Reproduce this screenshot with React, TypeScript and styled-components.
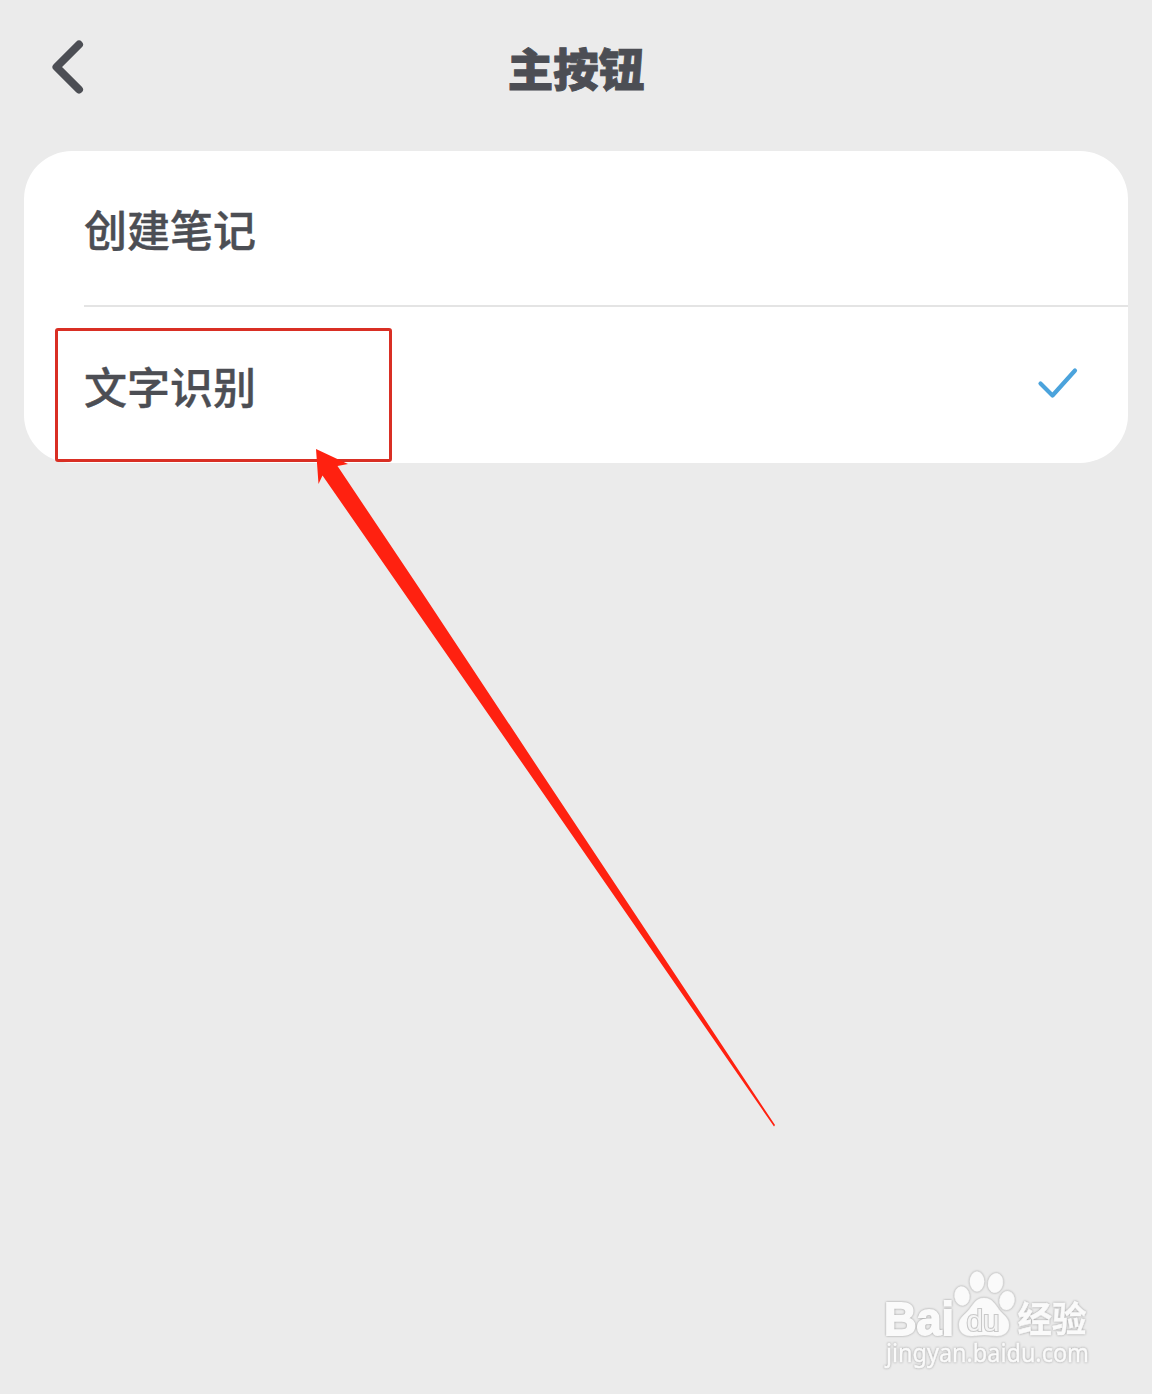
import React from 'react';
import styled, { createGlobalStyle } from 'styled-components';

const GlobalStyle = createGlobalStyle`
  body { margin: 0; background: #ebebeb; }
  * { box-sizing: border-box; }
`;
const Screen = styled.div`
  position: relative;
  width: 1152px;
  height: 1394px;
  overflow: hidden;
  background: #ebebeb;
  font-family: "Noto Sans CJK SC", sans-serif;
  color: #4c4e54;
`;
const Header = styled.header`
  display: grid;
  grid-template-columns: 120px 1fr 120px;
  align-items: center;
  height: 151px;
  padding-bottom: 13px;
`;
const BackButton = styled.button`
  display: flex;
  width: 40px;
  height: 60px;
  margin: 0 0 5px 47px;
  padding: 0;
  border: 0;
  background: none;
  color: #4c4e54;
`;
const Title = styled.h1`
  margin: 0 0 4px;
  text-align: center;
  font-size: 45.5px;
  line-height: 60px;
  font-weight: 900;
  -webkit-text-stroke: 0.9px currentColor;
`;
const Card = styled.main`
  margin: 0 24px;
  height: 312px;
  border-radius: 48px;
  background: #fff;
  overflow: hidden;
`;
const Row = styled.div<{ $divided?: boolean }>`
  display: flex;
  align-items: center;
  justify-content: space-between;
  height: 156px;
  margin-left: 60px;
  padding: 0 50px 0 0;
  border-bottom: ${p => (p.$divided ? '2px solid #e4e4e4' : '0')};
`;
const Label = styled.span`
  font-size: 43px;
  line-height: 60px;
  font-weight: 500;
  -webkit-text-stroke: 0.4px currentColor;
`;
const Check = styled.svg`
  margin-bottom: 4px;
`;
const Highlight = styled.div`
  position: absolute;
  left: 55px;
  top: 328px;
  width: 337px;
  height: 134px;
  border: 3px solid #d92f24;
  border-radius: 3px;
`;
const Arrow = styled.svg`
  position: absolute;
  left: 310px;
  top: 440px;
`;
const Watermark = styled.svg`
  position: absolute;
  left: 870px;
  top: 1260px;
  filter: drop-shadow(0 0 0.8px #999);
`;

export default function App() {
  return (
    <Screen>
      <GlobalStyle />
      <Header>
        <BackButton aria-label="返回">
          <svg width="40" height="60" viewBox="0 0 40 60" fill="none" stroke="currentColor" strokeWidth="8" strokeLinecap="round" strokeLinejoin="round">
            <path d="M32 7.500 9.500 30l22.500 22.500" />
          </svg>
        </BackButton>
        <Title>主按钮</Title>
      </Header>
      <Card>
        <Row $divided><Label>创建笔记</Label></Row>
        <Row>
          <Label>文字识别</Label>
          <Check width="42" height="34" viewBox="0 0 42 34" fill="none" stroke="#4ba3dc" strokeWidth="4.2" strokeLinecap="round" strokeLinejoin="round">
            <path d="M4.5 17.5 16.5 29.5 39 4.5" />
          </Check>
        </Row>
      </Card>
      <Highlight />
      <Arrow width="480" height="700" viewBox="310 440 480 700">
        <path fill="#ff2110" d="M316 449 348 464 337.500 466 420.500 590 539.500 770 775 1125 774 1126.500 527 770 402 590 322.500 475.500 318.500 484Z" />
      </Arrow>
      <Watermark width="240" height="120" viewBox="0 0 240 120" fill="#fafafa" stroke="#fafafa" strokeWidth="0.500">
        <text x="14" y="74.500" fontFamily="Liberation Sans, sans-serif" fontWeight="700" fontSize="47" textLength="70" lengthAdjust="spacingAndGlyphs" strokeWidth="1.800">Bai</text>
        <ellipse cx="92" cy="36" rx="7.500" ry="9.500" transform="rotate(-8 92 36)" />
        <ellipse cx="107" cy="21.500" rx="7.200" ry="10" />
        <ellipse cx="125.500" cy="23" rx="7.500" ry="9.800" transform="rotate(10 125.500 23)" />
        <ellipse cx="137" cy="40.500" rx="7.500" ry="9.500" transform="rotate(10 137 40.500)" />
        <path d="M114 38c-9 0-11 8-17 14-5 5-8 7-8 13 0 7 5 11 12 11 5 0 8-1 14-1 5 0 7 1 12 1 7 0 12-4 12-11 0-6-4-9-8-13-6-7-8-14-17-14Z" />
        <text x="96.500" y="70.500" fontFamily="Liberation Sans, sans-serif" fontWeight="400" fontSize="30" textLength="33" lengthAdjust="spacingAndGlyphs" fill="#f4f4f4" stroke="#c9c9c9" strokeWidth="2.200" paintOrder="stroke">du</text>
        <text x="147.500" y="71.500" fontFamily="Noto Sans CJK SC, sans-serif" fontWeight="700" fontSize="35" textLength="69" lengthAdjust="spacingAndGlyphs">经验</text>
        <text x="16" y="102" fontFamily="Noto Sans, sans-serif" fontSize="24.500" textLength="203" lengthAdjust="spacingAndGlyphs">jingyan.baidu.com</text>
      </Watermark>
    </Screen>
  );
}
